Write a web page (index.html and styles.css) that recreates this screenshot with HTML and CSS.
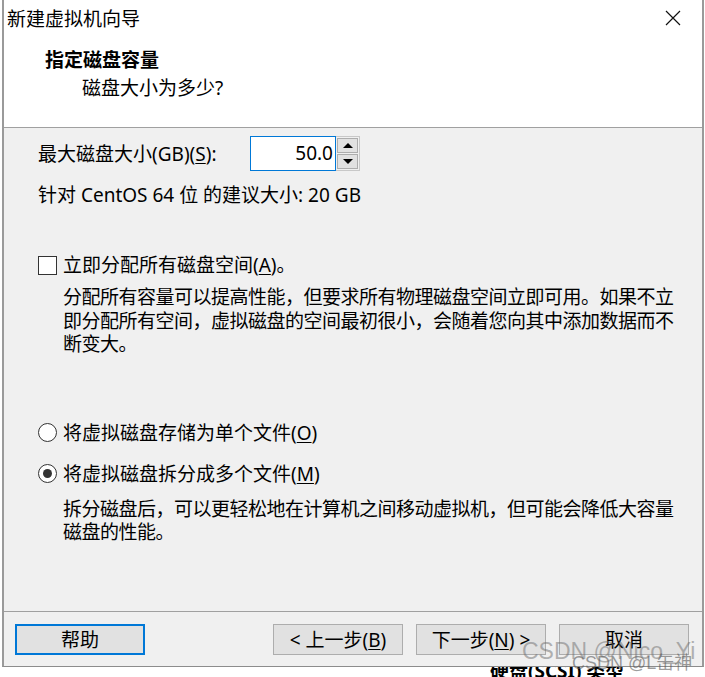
FILE: index.html
```html
<!DOCTYPE html>
<html lang="zh-CN">
<head>
    <meta charset="UTF-8">
    <meta name="viewport" content="width=device-width, initial-scale=1.0">
    <title>新建虚拟机向导</title>
    <link rel="stylesheet" href="styles.css">
</head>
<body>
    <div class="window">
        <div class="titlebar">
            <span class="title">新建虚拟机向导</span>
            <svg class="close" width="16" height="16" viewBox="0 0 16 16">
                <path d="M1 1 L15 15 M15 1 L1 15" stroke="#111" stroke-width="1.2" fill="none"/>
            </svg>
        </div>

        <div class="header">
            <h2>指定磁盘容量</h2>
            <p>磁盘大小为多少?</p>
        </div>

        <div class="content">
            <div class="size-row">
                <label class="size-label">最大磁盘大小(GB)(<u>S</u>):</label>
                <div class="spin">
                    <div class="spin-input">50.0</div>
                    <div class="spin-btns">
                        <div class="spin-btn"><span class="arrow-up"></span></div>
                        <div class="spin-btn"><span class="arrow-down"></span></div>
                    </div>
                </div>
            </div>
            <p class="hint">针对 CentOS 64 位 的建议大小: 20 GB</p>

            <div class="option check-row">
                <span class="checkbox"></span>
                <span>立即分配所有磁盘空间(<u>A</u>)。</span>
            </div>
            <p class="desc">分配所有容量可以提高性能，但要求所有物理磁盘空间立即可用。如果不立<br>即分配所有空间，虚拟磁盘的空间最初很小，会随着您向其中添加数据而不<br>断变大。</p>

            <div class="option radio-first">
                <span class="radio"></span>
                <span>将虚拟磁盘存储为单个文件(<u>O</u>)</span>
            </div>
            <div class="option radio-second">
                <span class="radio checked"></span>
                <span>将虚拟磁盘拆分成多个文件(<u>M</u>)</span>
            </div>
            <p class="desc">拆分磁盘后，可以更轻松地在计算机之间移动虚拟机，但可能会降低大容量<br>磁盘的性能。</p>
        </div>

        <div class="footer">
            <button class="btn btn-default">帮助</button>
            <div class="nav-btns">
                <button class="btn">&lt; 上一步(<u>B</u>)</button>
                <button class="btn">下一步(<u>N</u>) &gt;</button>
                <button class="btn">取消</button>
            </div>
            <span class="watermark wm-a">CSDN @Nico_Yi</span>
            <span class="watermark wm-b">CSDN @L缶神</span>
        </div>
    </div>
    <div class="behind">
        <span class="behind-text">硬盘(SCSI) 类型</span>
    </div>
</body>
</html>
```

FILE: styles.css
```css
body {
    margin: 0;
    padding: 0;
    background-color: #ffffff;
    font-family: "Noto Sans", "Noto Sans CJK SC", sans-serif;
    font-size: 19px;
    color: #000;
    overflow: hidden;
}
u {
    text-decoration: underline;
    text-underline-offset: 2px;
}
.window {
    position: relative;
    margin-left: 2px;
    width: 698px;
    height: 666px;
    border-left: 2px solid #9a9a9a;
    border-right: 2px solid #9a9a9a;
    border-bottom: 1px solid #8c8c8c;
    display: flex;
    flex-direction: column;
    background-color: #f0f0f0;
}
.titlebar {
    height: 40px;
    background: #fff;
    display: flex;
    align-items: center;
    justify-content: space-between;
    padding: 0 21px 0 3px;
}
.title {
    line-height: 24px;
    margin-top: -2px;
}
.close {
    margin-top: -4px;
}
.header {
    background: #fff;
    padding-left: 41px;
    border-bottom: 1px solid #a0a0a0;
    box-sizing: border-box;
    height: 88px;
}
.header h2 {
    margin: 8px 0 0;
    font-size: 19px;
    font-weight: bold;
    line-height: 24px;
}
.header p {
    margin: 4px 0 0 37px;
    line-height: 24px;
}
.content {
    flex: 1;
    padding: 8px 0 0 34px;
}
.size-row {
    display: flex;
    align-items: center;
    height: 35px;
}
.size-label {
    width: 212px;
    line-height: 24px;
}
.spin {
    display: flex;
    height: 35px;
}
.spin-input {
    width: 82px;
    height: 33px;
    border: 1px solid #0078d7;
    background: #fff;
    text-align: right;
    box-sizing: content-box;
    line-height: 33px;
    padding-right: 2px;
}
.spin-btns {
    display: flex;
    flex-direction: column;
    justify-content: center;
    gap: 1px;
    padding: 1px;
    border: 1px solid #c8c8c8;
    border-left: none;
    width: 24px;
    box-sizing: border-box;
}
.spin-btn {
    flex: 1;
    background: #e1e1e1;
    border: 1px solid #adadad;
    display: flex;
    align-items: center;
    justify-content: center;
}
.arrow-up {
    width: 0;
    height: 0;
    border-left: 5px solid transparent;
    border-right: 5px solid transparent;
    border-bottom: 5px solid #000;
}
.arrow-down {
    width: 0;
    height: 0;
    border-left: 5px solid transparent;
    border-right: 5px solid transparent;
    border-top: 5px solid #000;
}
.hint {
    margin: 12px 0 0 0;
    line-height: 24px;
}
.option {
    display: flex;
    align-items: center;
    gap: 6px;
    line-height: 24px;
}
.check-row {
    margin-top: 46px;
}
.checkbox {
    width: 17px;
    height: 17px;
    border: 1px solid #333;
    background: #fff;
}
.radio {
    width: 17px;
    height: 17px;
    border: 1px solid #333;
    border-radius: 50%;
    background: #fff;
    display: flex;
    align-items: center;
    justify-content: center;
}
.radio.checked::after {
    content: "";
    width: 9px;
    height: 9px;
    border-radius: 50%;
    background: #333;
}
.desc {
    margin: 9px 0 0 25px;
    white-space: nowrap;
    letter-spacing: -0.5px;
    line-height: 23.5px;
}
.radio-first {
    margin-top: 64px;
}
.radio-second {
    margin-top: 17px;
}
.radio-second + .desc {
    margin-top: 12px;
}
.footer {
    border-top: 1px solid #a0a0a0;
    display: flex;
    justify-content: space-between;
    align-items: flex-start;
    padding: 12px 13px 0 11px;
    box-sizing: border-box;
    height: 55px;
}
.nav-btns {
    display: flex;
    gap: 13px;
}
.btn {
    width: 130px;
    height: 31px;
    background: #e1e1e1;
    border: 1px solid #adadad;
    font-family: inherit;
    font-size: 19px;
    line-height: 24px;
    padding: 0;
    color: #000;
}
.btn-default {
    border: 2px solid #0078d7;
}
.watermark {
    position: absolute;
    color: rgba(110, 110, 110, 0.5);
    white-space: nowrap;
    font-family: "Liberation Sans", "Noto Sans CJK SC", sans-serif;
}
.wm-a {
    left: 518px;
    top: 638px;
    font-size: 23px;
}
.wm-b {
    left: 568px;
    top: 648px;
    font-size: 18px;
    color: rgba(90, 90, 90, 0.6);
}
.behind {
    height: 10px;
    overflow: hidden;
    padding-left: 490px;
}
.behind-text {
    display: block;
    margin-top: -6px;
    font-weight: bold;
    line-height: 20px;
}
```
